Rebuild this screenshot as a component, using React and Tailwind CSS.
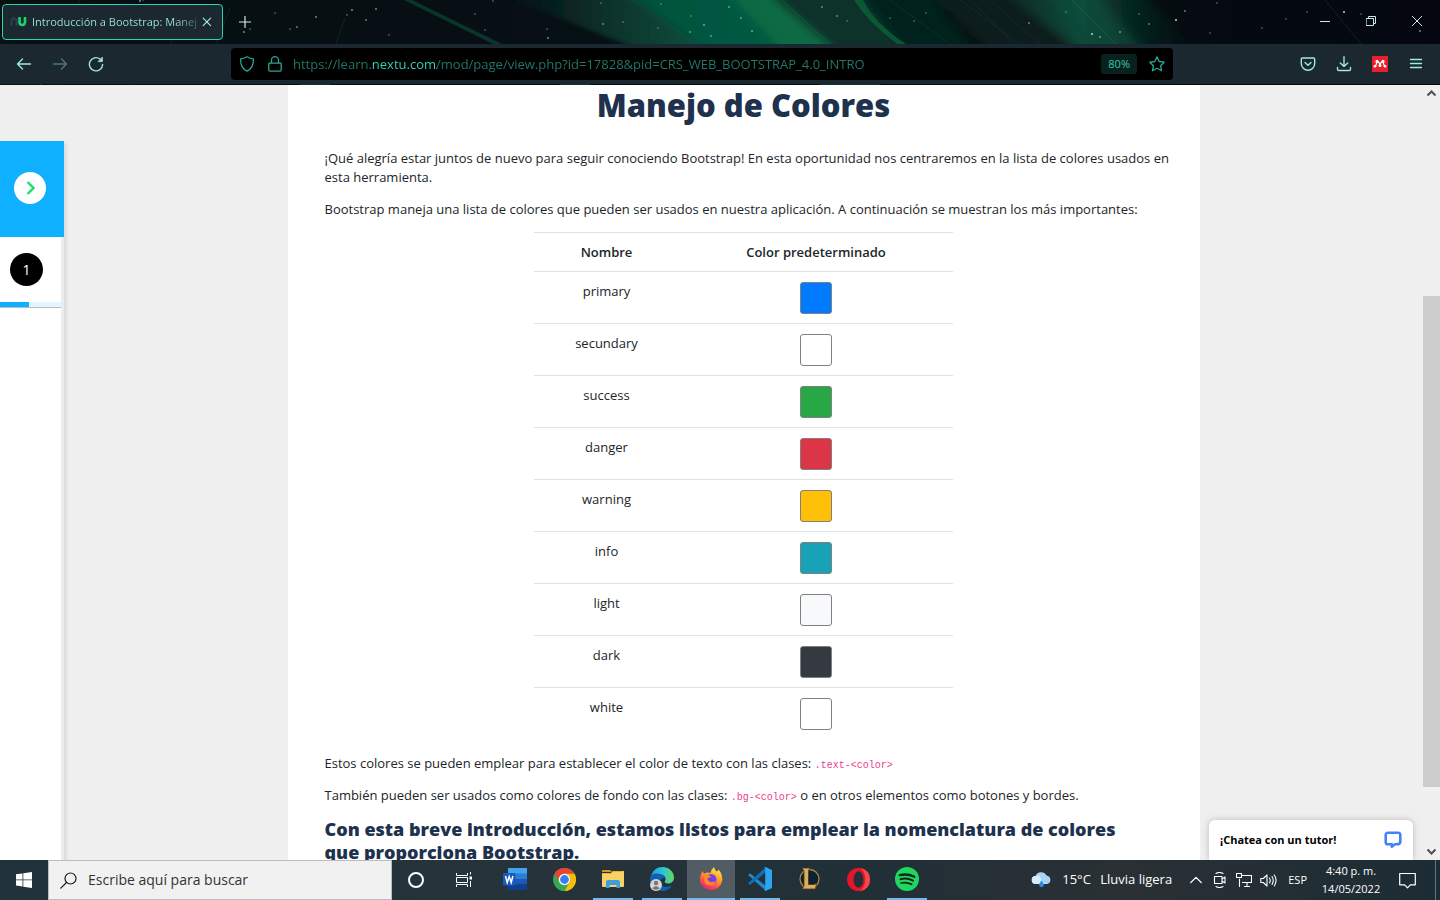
import React from "react";

const COLORS = [
  ["primary", "bg-[#007bff]"],
  ["secundary", "bg-white"],
  ["success", "bg-[#28a745]"],
  ["danger", "bg-[#dc3545]"],
  ["warning", "bg-[#ffc107]"],
  ["info", "bg-[#17a2b8]"],
  ["light", "bg-[#f8f9fa]"],
  ["dark", "bg-[#343a40]"],
  ["white", "bg-white"],
];

const STARS = [
  [140, 1], [143, 0], [250, 29], [244, 32], [275, 13], [290, 29], [297, 27], [316, 17], [347, 15], [352, 10], [366, 20], [376, 9],
  [389, 35], [475, 14], [493, 1], [485, 30], [547, 29], [548, 38], [601, 3], [623, 22], [603, 24], [658, 28], [661, 4], [691, 16],
  [690, 32], [704, 25], [729, 7], [741, 18], [752, 31], [711, 36], [822, 7], [837, 16], [847, 21], [890, 18], [914, 21], [926, 13],
  [1029, 23], [1066, 12], [1092, 34], [1100, 37], [1120, 32], [1139, 14], [1149, 24], [1176, 20], [1185, 11], [1217, 3], [1262, 28],
  [1210, 33], [1286, 19], [1307, 12], [1344, 12], [1361, 14], [1420, 31], [1454, 0],
];

function Sky() {
  return (
    <svg className="absolute inset-0 h-full w-full" viewBox="0 0 1440 85" preserveAspectRatio="none" aria-hidden="true">
      <defs>
        <filter id="soft" x="-10%" y="-50%" width="120%" height="200%"><feGaussianBlur stdDeviation="7 1" /></filter>
        <linearGradient id="sky" x1="0" x2="1" y1="0" y2="0">
          <stop offset="0" stopColor="#07110f" />
          <stop offset=".12" stopColor="#060f12" />
          <stop offset=".35" stopColor="#070f14" />
          <stop offset=".7" stopColor="#05130f" />
          <stop offset=".85" stopColor="#050a11" />
          <stop offset="1" stopColor="#04070f" />
        </linearGradient>
        <linearGradient id="glow" x1="0" x2="1" y1="0" y2="0">
          <stop offset="0" stopColor="#08201f" stopOpacity="0" />
          <stop offset=".3" stopColor="#0a2f2a" />
          <stop offset=".6" stopColor="#074f3d" />
          <stop offset="1" stopColor="#066b44" />
        </linearGradient>
        <linearGradient id="glow2" x1="0" x2="1" y1="0" y2="0">
          <stop offset="0" stopColor="#0a2a24" />
          <stop offset=".4" stopColor="#0b4634" />
          <stop offset="1" stopColor="#082622" stopOpacity="0" />
        </linearGradient>
      </defs>
      <rect width="1440" height="85" fill="url(#sky)" />
      <g filter="url(#soft)">
        <path d="M490-10H764L850 54H650z" fill="url(#glow)" />
        <path d="M620-10H765L840 54H715z" fill="#065a40" opacity=".7" />
        <path d="M725-10h38l75 64h-52z" fill="#08754a" opacity=".6" />
        <path d="M764-10h95l58 64h-78z" fill="#0a332a" />
        <path d="M858-10h68l50 64h-70z" fill="#06201f" />
        <path d="M925-10h80l68 64h-80z" fill="#071a1b" />
        <path d="M1002-10h138l58 64h-118z" fill="url(#glow2)" />
        <path d="M1045-10h50l50 64h-58z" fill="#0d5040" opacity=".6" />
      </g>
      <path d="M854 0h9q12 24 43 44h-9Q868 22 854 0z" fill="#0a6a3c" opacity=".7" />
      <path d="M404 0h8l90 44h-9z" fill="#0b3a2e" opacity=".9" />
      <path d="M230 8l-14 36M345 18l-9 26M60 40l20-40M170 44l8-14" stroke="#0a3a2b" fill="none" opacity=".6" />
      <path d="M960 0l60 44M972 2l42 42M990 0l50 44M890 0l60 44M1325 0l36 44" stroke="#0b3430" fill="none" opacity=".7" />
      <path d="M765 0l46 44M782 0l48 44M1072 0l44 44" stroke="#0a7a45" fill="none" opacity=".5" />
      <path d="M40 84.500h2M300 84.500h30M560 84.500h30M820 84.500h60" stroke="#06382a" />
      {STARS.map(([x, y]) => (
        <circle key={x} cx={x} cy={y} r={x % 4 === 0 ? 1.1 : 0.8} fill="#b9dcd4" opacity={x % 3 === 0 ? 0.9 : 0.55} />
      ))}
    </svg>
  );
}

const Line = ({ size = 16, className = "", sw = 1.4, children, vb = "0 0 16 16" }) => (
  <svg width={size} height={size} viewBox={vb} fill="none" stroke="currentColor" strokeWidth={sw} strokeLinecap="round" strokeLinejoin="round" className={className} aria-hidden="true">
    {children}
  </svg>
);

function TabBar() {
  return (
    <div className="relative flex h-11 items-start text-[#9eeadb]">
      <div className="mt-1 ml-0.5 flex h-9 w-[221px] items-center rounded border border-[#2fd0b5] bg-[#1c282f] pl-[7px]">
        <svg width="17" height="10" viewBox="0 0 17 10" fill="none" strokeWidth="2.6" aria-hidden="true">
          <path d="M1.5 9V4.5Q1.5 1.5 4 1.5T6.7 4.5V9" stroke="#2c3b4e" />
          <path d="M9.5 0V5Q9.5 8 12.2 8T15 5V0" stroke="#19d46b" />
        </svg>
        <span className="ml-[5px] w-[168px] bg-gradient-to-r from-[#9eeadb] from-85% to-[#9eeadb]/20 bg-clip-text text-[11px] whitespace-nowrap text-transparent">
          Introducción a Bootstrap: Manej
        </span>
        <button aria-label="Cerrar pestaña" className="ml-0.5">
          <Line size={10} sw={1.2} vb="0 0 10 10"><path d="M1.2 1.2l7.4 7.4M8.6 1.2L1.2 8.6" /></Line>
        </button>
      </div>
      <button aria-label="Nueva pestaña" className="mt-4 ml-4 text-[#d5ece8]">
        <Line size={12} sw={1.2} vb="0 0 12 12"><path d="M6 .5v11M.5 6h11" /></Line>
      </button>
      <div className="mt-4 mr-[18px] ml-auto flex items-center gap-9 text-[#cfe6e2]">
        <button aria-label="Minimizar"><Line size={10} sw={1} vb="0 0 10 10"><path d="M0 5.5h10" /></Line></button>
        <button aria-label="Restaurar"><Line size={10} sw={1} vb="0 0 10 10"><path d="M.5 2.5h7v7h-7zM2.5 2.5v-2h7v7h-2" /></Line></button>
        <button aria-label="Cerrar"><Line size={10} sw={1} vb="0 0 10 10"><path d="M0 0l10 10M10 0L0 10" /></Line></button>
      </div>
    </div>
  );
}

function Toolbar() {
  return (
    <div className="relative mb-px flex h-10 items-center bg-[#1c282f] text-[#9eeadb]">
      <div className="flex w-[231px] shrink-0 items-center gap-5 pl-4">
        <button aria-label="Atrás"><Line><path d="M1.5 8h13M6.5 3L1.5 8l5 5" /></Line></button>
        <button aria-label="Adelante" className="text-[#4a7a76]"><Line><path d="M14.5 8h-13M9.5 3l5 5-5 5" /></Line></button>
        <button aria-label="Recargar">
          <Line sw={1.4}><path d="M14.600 8.400A6.600 6.600 0 1 1 12 3" /><path d="M14.400 1.400v4.200h-4z" fill="currentColor" strokeWidth=".8" /></Line>
        </button>
      </div>
      <div className="flex h-8 min-w-0 flex-1 items-center rounded bg-black px-2 text-[#27a892]">
        <Line sw={1.3}><path d="M8 .8q3 2 6.4 2 .4 9-6.4 12.4Q1.200 11.800 1.600 2.800 5 2.800 8 .8z" /></Line>
        <Line sw={1.3} className="ml-3"><path d="M2.5 7.200h11q.7 0 .7.700v6q0 1.200-1.200 1.200H3q-1.200 0-1.200-1.200v-6q0-.7.700-.7zM4.500 7V4.200a3.500 3.500 0 0 1 7 0V7" /></Line>
        <input
          aria-label="Dirección"
          defaultValue="https://learn.nextu.com/mod/page/view.php?id=17828&pid=CRS_WEB_BOOTSTRAP_4.0_INTRO"
          className="ml-2.5 min-w-0 flex-1 bg-[linear-gradient(90deg,#24776b_79px,#34d6bb_79px,#34d6bb_144px,#24776b_144px)] bg-clip-text pt-0.5 text-[13px] text-transparent outline-none"
        />
        <button className="h-5 rounded-[3px] bg-[#08211e] px-[7px] text-[11px] text-[#39c9b1]">80%</button>
        <button aria-label="Marcar página" className="ml-3">
          <Line sw={1.3}><path d="M8 .9l2.200 4.600 5 .7-3.600 3.500.9 5L8 12.300 3.500 14.700l.9-5L.8 6.200l5-.7z" /></Line>
        </button>
      </div>
      <div className="flex w-[267px] shrink-0 items-center justify-end gap-5 pr-4">
        <button aria-label="Pocket"><Line><path d="M2.500 2h11q1.200 0 1.200 1.200V7.500a6.700 6.700 0 0 1-13.400 0V3.200Q1.300 2 2.500 2z" /><path d="M5 6.500l3 2.800 3-2.800" /></Line></button>
        <button aria-label="Descargas"><Line><path d="M8 .8v9.700M4.300 7L8 10.600 11.700 7M1.500 11.500v1.700q0 1.300 1.300 1.300h10.400q1.300 0 1.300-1.300v-1.700" /></Line></button>
        <button aria-label="Mendeley">
          <svg width="16" height="16" viewBox="0 0 16 16" aria-hidden="true">
            <path d="M0 0h16v16H0z" fill="#e8202e" />
            <path d="M3.300 10.300Q4.700 8.500 4.900 5.400q2.600.6 3.100 3.600.5-3 3.100-3.600.200 3.100 1.600 4.900" fill="none" stroke="#fff" strokeWidth="1.300" />
            <circle cx="5" cy="5.300" r="1.500" fill="#fff" /><circle cx="11" cy="5.300" r="1.500" fill="#fff" />
            <circle cx="3" cy="10.200" r="1.300" fill="#fff" /><circle cx="8" cy="9.600" r="1.500" fill="#fff" /><circle cx="13" cy="10.200" r="1.300" fill="#fff" />
          </svg>
        </button>
        <button aria-label="Menú"><Line sw={1.300}><path d="M2.500 3.500h11M2.500 7.500h11M2.500 11.500h11" /></Line></button>
      </div>
    </div>
  );
}

function SideRail() {
  return (
    <aside className="mt-14 flex w-16 shrink-0 flex-col bg-[#ececee] shadow-[2px_2px_4px_#d4d6dc]">
      <button aria-label="Abrir contenido" className="flex h-24 items-center justify-center bg-[#0fb0ff] pr-1 pb-0.5">
        <span className="flex size-8 items-center justify-center rounded-full bg-white">
          <svg width="10" height="14" viewBox="0 0 10 14" fill="none" stroke="#19e06d" strokeWidth="2.400" className="ml-0.5" aria-hidden="true"><path d="M1.500 1l6 6-6 6" /></svg>
        </span>
      </button>
      <div className="w-[61px] flex-1 bg-white">
        <div className="border-b border-[#b5bcc4]">
          <div className="flex h-[65px] items-center pl-2.5">
            <button className="size-[33px] rounded-full bg-black text-sm text-white">1</button>
          </div>
          <div className="h-[5px] bg-[#e4f5ff]"><div className="h-full w-[29px] bg-[#0fb0ff]" /></div>
        </div>
      </div>
    </aside>
  );
}

function Article() {
  return (
    <main className="mx-auto w-[912px] shrink-0 bg-white px-[37px] text-[13px] leading-[19px] text-[#212529]">
      <h1 className="mb-6 text-center text-[31px] leading-10 font-extrabold text-[#20314d]">Manejo de Colores</h1>
      <p className="-mr-3 mb-[13px]">
        ¡Qué alegría estar juntos de nuevo para seguir conociendo Bootstrap! En esta oportunidad nos centraremos en la lista de colores usados en esta herramienta.
      </p>
      <p className="mb-[13px]">Bootstrap maneja una lista de colores que pueden ser usados en nuestra aplicación. A continuación se muestran los más importantes:</p>
      <table className="mx-auto w-[419px] table-fixed text-center">
        <thead>
          <tr className="h-[39px] border-t border-[#dee2e6]">
            <th className="w-[145px] font-semibold">Nombre</th>
            <th className="font-semibold">Color predeterminado</th>
          </tr>
        </thead>
        <tbody>
          {COLORS.map(([name, bg]) => (
            <tr key={name} className="h-[52px] border-t border-[#dee2e6] align-top">
              <td className="pt-2.5">{name}</td>
              <td className="pt-2.5"><div className={"mx-auto size-8 rounded-[3px] border border-[#808080] " + bg} /></td>
            </tr>
          ))}
        </tbody>
      </table>
      <p className="mt-[14px] mb-[13px]">
        Estos colores se pueden emplear para establecer el color de texto con las clases: <code className="font-['Liberation_Mono',monospace] text-[10px] leading-none text-[#e83e8c]">.text-&lt;color&gt;</code>
      </p>
      <p className="mb-[13px]">
        También pueden ser usados como colores de fondo con las clases: <code className="font-['Liberation_Mono',monospace] text-[10px] leading-none text-[#e83e8c]">.bg-&lt;color&gt;</code> o en otros elementos como botones y bordes.
      </p>
      <h2 className="pr-5 text-lg leading-[23px] font-extrabold text-[#20314d]">
        Con esta breve introducción, estamos listos para emplear la nomenclatura de colores que proporciona Bootstrap.
      </h2>
    </main>
  );
}

function ScrollBar() {
  return (
    <div className="flex w-[17px] shrink-0 flex-col items-center bg-[#f0f0f0] text-[#505050]">
      <svg width="17" height="17" viewBox="0 0 17 17" fill="none" stroke="currentColor" strokeWidth="2" aria-hidden="true"><path d="M4.500 10.500l4-4 4 4" /></svg>
      <div className="grow-[194]" />
      <div className="w-full grow-[491] bg-[#cdcdcd]" />
      <div className="grow-[56]" />
      <svg width="17" height="17" viewBox="0 0 17 17" fill="none" stroke="currentColor" strokeWidth="2" aria-hidden="true"><path d="M4.500 6.500l4 4 4-4" /></svg>
    </div>
  );
}

const APPS = [
  ["Word", "", (
    <svg width="24" height="22" viewBox="0 0 24 22">
      <path d="M5 0h19v6H5z" fill="#41a5ee" /><path d="M5 5.500h19V11H5z" fill="#2b7cd3" /><path d="M5 11h19v5.500H5z" fill="#185abd" /><path d="M5 16.500h19V22H5z" fill="#103f91" />
      <rect y="5" width="12.500" height="12.500" rx="1" fill="#185abd" />
      <path d="M2.500 8l1.700 6.500L6.200 8.500l2 6L9.900 8" stroke="#fff" strokeWidth="1.500" fill="none" />
    </svg>
  )],
  ["Chrome", "", (
    <svg width="23" height="23" viewBox="0 0 24 24">
      <circle cx="12" cy="12" r="12" fill="#34a853" />
      <path d="M1.600 6A12 12 0 0 1 22.400 6H12a6 6 0 0 0-5.200 9z" fill="#ea4335" />
      <path d="M22.400 6A12 12 0 0 1 12 24l5.200-9A6 6 0 0 0 12 6z" fill="#fbbc05" />
      <circle cx="12" cy="12" r="6" fill="#fff" /><circle cx="12" cy="12" r="4.600" fill="#3b7ded" />
    </svg>
  )],
  ["Explorador", "line", (
    <svg width="22" height="18" viewBox="0 0 22 18">
      <path d="M0 1q0-1 1-1h7l2 2H0z" fill="#d99a1c" /><path d="M0 3h9l2-2h11v15q0 1-1 1H1q-1 0-1-1z" fill="#f9d263" /><path d="M0 3h9l2-2h10v1H11L9 4H0z" fill="#e8b33c" />
      <path d="M4 18v-6q0-2 2-2h10q2 0 2 2v6h-3.500v-3h-7v3z" fill="#3d9de0" />
    </svg>
  )],
  ["Edge", "line", (
    <svg width="24" height="24" viewBox="0 0 24 24">
      <defs><linearGradient id="edge" x1="0" x2="1"><stop offset="0" stopColor="#1e9de0" /><stop offset=".5" stopColor="#2fc2df" /><stop offset="1" stopColor="#5fdc55" /></linearGradient></defs>
      <path d="M1 9C3 3 7 0 12.500 0 19 0 24 5 24 10.500c0 4-3 6-6 6-2.500 0-4-1-3-2.500 2-3-1-7-6-7-4 0-7 2-8 2z" fill="url(#edge)" />
      <path d="M0 12C0 8 4 6 8 6.500c4 .5 6.500 2.500 7 4.500-3-.5-5 1-5 4 0 4 5 6.500 12 3.500C20 22 16.500 24 12 24 5 24 0 18.500 0 12z" fill="#1160b5" />
      <circle cx="6" cy="18" r="6" fill="#d5d5d5" /><circle cx="6" cy="16" r="2.200" fill="#777" /><path d="M2.300 21.500q3.700-5 7.400 0Q6 24 2.300 21.500z" fill="#777" />
    </svg>
  )],
  ["Firefox", "active", (
    <svg width="24" height="24" viewBox="0 0 24 24">
      <defs><linearGradient id="fox" x1=".8" y1="0" x2=".3" y2="1"><stop offset="0" stopColor="#fff24a" /><stop offset=".4" stopColor="#ffa32b" /><stop offset=".75" stopColor="#ff4a4a" /><stop offset="1" stopColor="#e31b8b" /></linearGradient></defs>
      <path d="M15 0q.5 3 3 4.500 1.500-1 1.500-2Q23.500 7 23.300 13A11.300 11.300 0 0 1 .8 13Q.8 8 3.500 4q.5 2 2 2.500Q8 5 11.500 6 12.500 2 15 0z" fill="url(#fox)" />
      <circle cx="12" cy="12.500" r="5.500" fill="#7a3fe0" /><path d="M5 8q4-1 7 1.500-1.500 1.500-3.500 1.500 0 3 3 4 3.500.5 5-1-1 4.500-5.500 4.500Q5 18 5 12z" fill="#ff8a2a" />
    </svg>
  )],
  ["Visual Studio Code", "line", (
    <svg width="24" height="24" viewBox="0 0 24 24">
      <path d="M0 8l2-1.800L18 19v5z" fill="#1f8ad2" /><path d="M0 16.200L2 18 18 5V0z" fill="#0f6fb5" /><path d="M17.500 0L24 3v18l-6.500 3q-.8 0-1.200-.8.900.3.900-.7V1.500q0-1-.9-.7.400-.8 1.200-.8z" fill="#2ba5f1" />
    </svg>
  )],
  ["League of Legends", "", (
    <svg width="22" height="24" viewBox="0 0 22 24">
      <circle cx="11.500" cy="12" r="9.500" fill="#0c2230" stroke="#a9853f" strokeWidth="1.300" />
      <path d="M4 1h8l-1.500 2.500V17.500H16l2.500-1L17.500 22H4l2-3V4z" fill="#d9ae62" stroke="#4a3213" strokeWidth=".8" />
    </svg>
  )],
  ["Opera", "", (
    <svg width="23" height="23" viewBox="0 0 24 24">
      <circle cx="12" cy="12" r="12" fill="#e5152a" /><path d="M14 0q10 2 10 12T14 24q5-4 5-12T14 0z" fill="#f5484d" /><ellipse cx="12" cy="12" rx="5.200" ry="8.500" fill="#243238" />
    </svg>
  )],
  ["Spotify", "line", (
    <svg width="24" height="24" viewBox="0 0 24 24">
      <circle cx="12" cy="12" r="12" fill="#1ed760" />
      <g fill="none" stroke="#15251b" strokeLinecap="round"><path d="M4.800 8.200q7.500-2 14.500 1.600" strokeWidth="2.300" /><path d="M5.500 12.200q6.500-1.700 12.500 1.500" strokeWidth="2" /><path d="M6 16q5.500-1.300 10.600 1.300" strokeWidth="1.700" /></g>
    </svg>
  )],
];

function TaskBar() {
  return (
    <footer className="flex h-10 shrink-0 bg-[linear-gradient(90deg,#21323a,#26333a_40%,#212f37_60%,#2a3034_78%,#1c2c35)] text-white">
      <button aria-label="Inicio" className="flex w-12 shrink-0 items-center justify-center">
        <svg width="16" height="16" viewBox="0 0 16 16" fill="#fff" aria-hidden="true"><path d="M0 2.300L6.500 1.400v6.100H0zM7.300 1.300L16 0v7.500H7.300zM0 8.300h6.500v6.200L0 13.600zM7.300 8.300H16V16l-8.700-1.300z" /></svg>
      </button>
      <label className="flex w-[344px] shrink-0 items-center border border-[#bcbcbc] bg-[#f1f1f1] pl-[11px] text-[#1a1a1a]">
        <Line size={17} sw={1.200} vb="0 0 17 17"><circle cx="10.500" cy="6.500" r="5.500" /><path d="M6.500 10.500L.8 16.200" /></Line>
        <input aria-label="Buscar" placeholder="Escribe aquí para buscar" className="ml-[11px] min-w-0 flex-1 text-sm outline-none placeholder:text-[#333]" />
      </label>
      <button aria-label="Cortana" className="flex w-12 shrink-0 items-center justify-center"><span className="size-4 rounded-full border-2 border-white" /></button>
      <button aria-label="Vista de tareas" className="mr-[3px] flex w-12 shrink-0 items-center justify-center">
        <svg width="17" height="16" viewBox="0 0 17 16" fill="none" stroke="#fff" aria-hidden="true"><path d="M.5 1v2.500h11V1M.5 5.500h11v5H.5zM.5 15v-2.500h11V15M14.500 0v2.500M14.500 9v6" /><path d="M13.500 4.500h2.500v3h-2.500z" fill="#fff" stroke="none" /></svg>
      </button>
      <nav className="flex gap-px">
        {APPS.map(([name, state, icon]) => (
          <button key={name} aria-label={name} className={"flex w-12 flex-col items-center " + (state === "active" ? "bg-[#515d63]" : "")}>
            <span className="flex flex-1 items-center">{icon}</span>
            <span className={"h-0.5 " + (state === "active" ? "w-full bg-[#76b9ed]" : state === "line" ? "w-10 bg-[#76b9ed]" : "")} />
          </button>
        ))}
      </nav>
      <div className="ml-auto flex items-center text-[13px] whitespace-nowrap">
        <svg width="21" height="16" viewBox="0 0 21 16" className="mr-2.5" aria-hidden="true">
          <path d="M5 12a4 4 0 0 1-.5-8A6 6 0 0 1 15.500 3.500 4.400 4.400 0 0 1 16.500 12z" fill="#a8d2f7" /><path d="M5 12a4 4 0 0 1-.5-8Q9 2 10 7q1 4 6 5z" fill="#dcebfa" /><path d="M10.500 8.500q3 3.500 2.300 5a2.400 2.400 0 0 1-4.600 0q-.7-1.500 2.300-5z" fill="#2b8be8" />
        </svg>
        <span className="w-[38px]">15°C</span>
        <span className="w-[90px]">Lluvia ligera</span>
        <button aria-label="Iconos ocultos" className="mr-[10px]"><Line size={12} sw={1.200} vb="0 0 12 12"><path d="M.8 8.500L6 3.300l5.200 5.200" /></Line></button>
        <Line size={16} sw={1.100} className="mr-2"><path d="M2.500 4.500h7.500v7H2.500zM10 7l3-2v6l-3-2M4 1.500q3.500-2 7 0M4 14.500q3.500 2 7 0" /></Line>
        <Line size={16} sw={1.100} className="mr-2"><path d="M5.500 3.500h10v7h-9M3.500 7v7.500M8.500 14.500h5M11 10.500v4M.5 1.500h5v4h-5z" /></Line>
        <Line size={17} sw={1.100} vb="0 0 17 16" className="mr-[11px]"><path d="M.8 6h2.500L7 2.500v11L3.300 10H.8zM9.500 5.500q1.500 2.500 0 5M12 4q2.500 4 0 8M14.300 2.500q3.500 5.500 0 11" /></Line>
        <span className="text-[11px]">ESP</span>
        <div className="mx-[14px] w-[60px] text-center text-[11px] leading-[18px]">4:40 p. m.<br />14/05/2022</div>
        <button aria-label="Notificaciones" className="mr-[19px] ml-1"><Line size={17} sw={1.200} vb="0 0 17 17"><path d="M.7 1.500h15.600v11.300h-5L8.500 15.800l-2.800-3H.7z" /></Line></button>
        <div className="mr-1 h-10 w-px bg-[#6c777c]" />
      </div>
    </footer>
  );
}

export default function App() {
  return (
    <div className="flex h-screen flex-col overflow-hidden bg-[#efefef] font-['Open_Sans',sans-serif]">
      <header className="relative shrink-0 bg-black">
        <Sky />
        <TabBar />
        <Toolbar />
      </header>
      <div className="relative flex min-h-0 flex-1 overflow-hidden">
        <SideRail />
        <Article />
        <ScrollBar />
        <button className="absolute right-[27px] bottom-0 flex h-10 w-[204px] items-center justify-between rounded-t-md bg-white px-[11px] text-[11px] font-bold text-black shadow-[0_0_6px_#b8b8b8]">
          ¡Chatea con un tutor!
          <svg width="18" height="18" viewBox="0 0 18 18" fill="none" stroke="#4384f5" strokeWidth="2.600" strokeLinejoin="round" aria-hidden="true"><path d="M4 1.800h10q2.300 0 2.300 2.300v6.300q0 2.500-2.500 2.700L11 13.300l-3.200 2.500v-2.500H4q-2.300 0-2.300-2.300V4.100Q1.700 1.800 4 1.800z" /></svg>
        </button>
      </div>
      <TaskBar />
    </div>
  );
}
